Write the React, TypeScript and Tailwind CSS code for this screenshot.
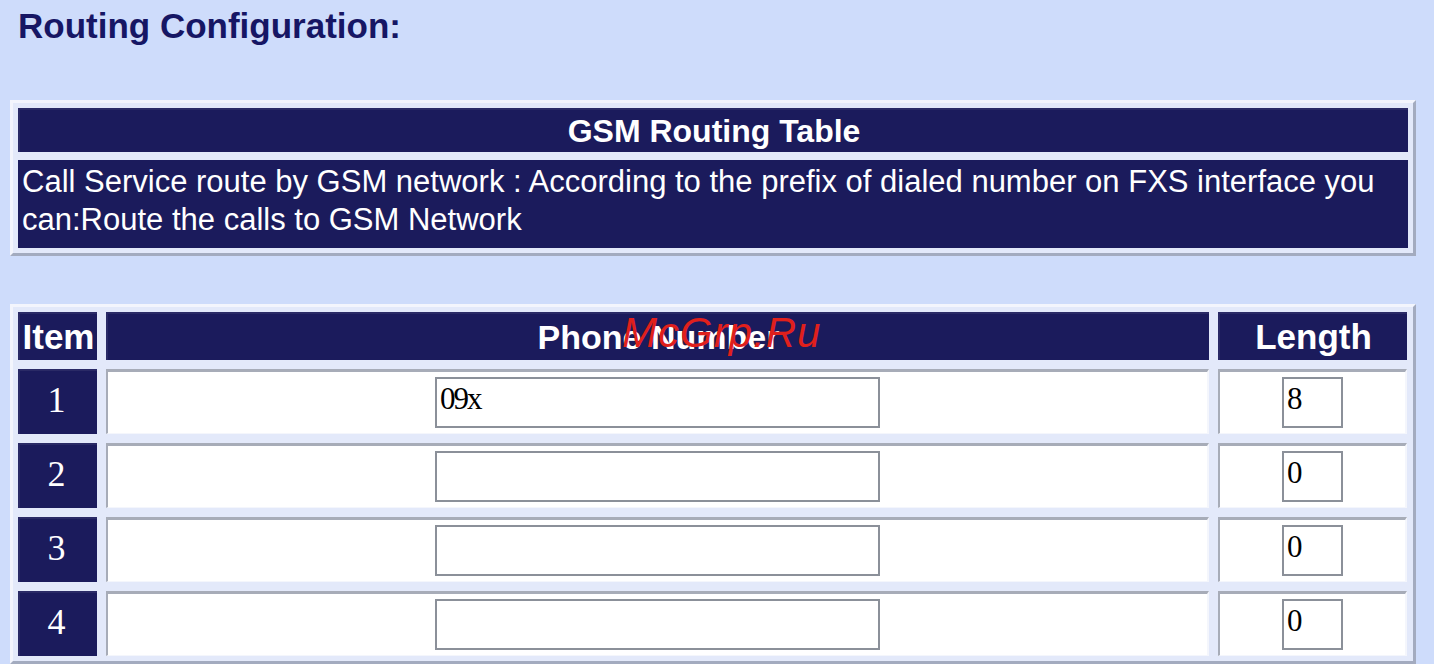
import React from "react";

const navy = "bg-[#1b1b5c]";

function NavyCell({ children, className = "" }: { children?: React.ReactNode; className?: string }) {
  return (
    <div className={`${navy} text-white flex items-center justify-center border-t-2 border-l-2 border-t-[#2a2a66] border-l-[#2a2a66] ${className}`}>
      {children}
    </div>
  );
}

function WhiteCell({ children }: { children?: React.ReactNode }) {
  return (
    <div className="bg-white flex items-center justify-center border-t-[3px] border-l-[2px] border-t-[#a7acb8] border-l-[#a7acb8] border-r-[2px] border-b border-r-[#f4f6fc] border-b-[#f4f6fc]">
      {children}
    </div>
  );
}

function Input({ value, w }: { value: string; w: string }) {
  return (
    <input
      readOnly
      value={value}
      className={`${w} h-[51px] bg-white border-2 border-[#8b9099] pl-[3px] pb-[8px] text-black text-[31px] tracking-[-2px] outline-none`}
      style={{ fontFamily: '"Liberation Serif", "Times New Roman", serif' }}
    />
  );
}

const rows = [
  { n: "1", phone: "09x", len: "8" },
  { n: "2", phone: "", len: "0" },
  { n: "3", phone: "", len: "0" },
  { n: "4", phone: "", len: "0" },
];

export default function App() {
  return (
    <div
      className="min-h-screen w-full bg-[#cedcfb] pl-[10px] overflow-hidden"
      style={{ fontFamily: '"Liberation Sans", Arial, sans-serif' }}
    >
      <h1 className="pl-[8px] pt-[9px] text-[35px] leading-[34px] font-bold text-[#161664]">
        Routing Configuration:
      </h1>

      {/* GSM Routing Table */}
      <div className="mt-[57px] w-[1406px] bg-[#e3e9fa] border-t-[3px] border-l-[3px] border-t-[#f3f5fd] border-l-[#f3f5fd] border-r-[3px] border-b-[3px] border-r-[#a3abbf] border-b-[#a3abbf] pt-[5px] pl-[5px] pr-[5px] pb-[5px]">
        <div className="flex flex-col gap-[8px]">
          <NavyCell className="h-[44px] text-[32px] font-bold">GSM Routing Table</NavyCell>
          <div className={`${navy} h-[88px] text-white text-[31px] leading-[38px] pl-[4px] pt-[3px]`}>
            Call Service route by GSM network : According to the prefix of dialed number on FXS interface you can:Route the calls to GSM Network
          </div>
        </div>
      </div>

      {/* Phone table */}
      <div className="relative mt-[48px] w-[1406px] bg-[#e3e9fa] border-t-[3px] border-l-[3px] border-t-[#f3f5fd] border-l-[#f3f5fd] border-r-[3px] border-b-[3px] border-r-[#a3abbf] border-b-[#a3abbf] pt-[5px] pl-[5px] pr-[6px] pb-[5px]">
        <div className="grid grid-cols-[79px_1103px_189px] grid-rows-[48px_65px_65px_65px_65px] gap-[9px]">
          <NavyCell className="text-[35px] font-bold">Item</NavyCell>
          <NavyCell className="text-[34px] font-bold">Phone Number</NavyCell>
          <NavyCell className="text-[35px] font-bold">Length</NavyCell>
          {rows.map((r) => (
            <React.Fragment key={r.n}>
              <NavyCell>
                <span
                  className="text-[36px] leading-none pb-[6px] pr-[4px]"
                  style={{ fontFamily: '"Liberation Serif", "Times New Roman", serif' }}
                >
                  {r.n}
                </span>
              </NavyCell>
              <WhiteCell>
                <Input value={r.phone} w="w-[445px]" />
              </WhiteCell>
              <WhiteCell>
                <Input value={r.len} w="w-[61px]" />
              </WhiteCell>
            </React.Fragment>
          ))}
        </div>
        <div className="absolute left-[609px] top-[5px] text-[42px] italic text-[#e0201c] tracking-[1px] leading-none pointer-events-none">
          McGrp.Ru
        </div>
      </div>
    </div>
  );
}
